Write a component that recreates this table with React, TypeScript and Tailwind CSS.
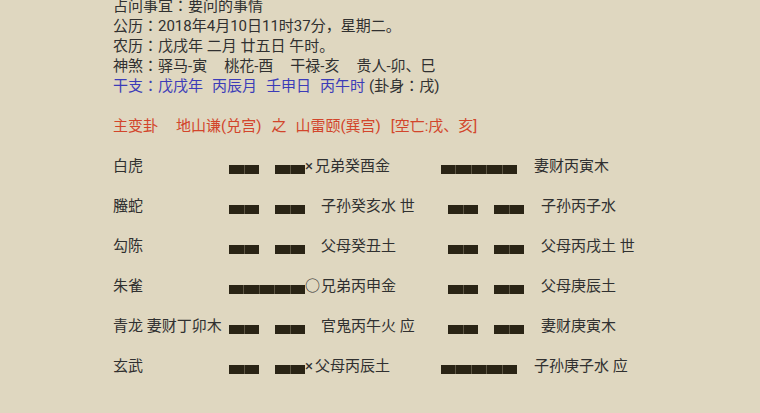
import React from "react";

type Line = "yin" | "yang";
type Row = {
  god: string;
  fu?: string;
  left: Line;
  mark?: "x" | "o";
  lt: string;
  right: Line;
  rt: string;
};

const rows: Row[] = [
  { god: "白虎", left: "yin", mark: "x", lt: "兄弟癸酉金", right: "yang", rt: "妻财丙寅木" },
  { god: "螣蛇", left: "yin", lt: "子孙癸亥水 世", right: "yin", rt: "子孙丙子水" },
  { god: "勾陈", left: "yin", lt: "父母癸丑土", right: "yin", rt: "父母丙戌土 世" },
  { god: "朱雀", left: "yang", mark: "o", lt: "兄弟丙申金", right: "yin", rt: "父母庚辰土" },
  { god: "青龙", fu: "妻财丁卯木", left: "yin", lt: "官鬼丙午火 应", right: "yin", rt: "妻财庚寅木" },
  { god: "玄武", left: "yin", mark: "x", lt: "父母丙辰土", right: "yang", rt: "子孙庚子水 应" },
];

function Seg() {
  return <div className="flex-1 h-full bg-[#2a2415] border-l border-[#5d5644] first:border-l-0" />;
}

function Bar({ type }: { type: Line }) {
  if (type === "yang") {
    return (
      <div className="flex w-[76px] h-[9px] mt-[6px]">
        <Seg />
        <Seg />
        <Seg />
        <Seg />
        <Seg />
      </div>
    );
  }
  return (
    <div className="flex w-[76px] h-[9px] mt-[6px] gap-[16px]">
      <div className="flex w-[30px] h-full">
        <Seg />
        <Seg />
      </div>
      <div className="flex w-[30px] h-full">
        <Seg />
        <Seg />
      </div>
    </div>
  );
}

export default function App() {
  return (
    <div className="w-[760px] h-[413px] overflow-hidden bg-[#dfd7c0] text-[#303030] text-[15px] leading-[20px] font-[Roboto,'Noto_Sans_CJK_JP','Noto_Sans_CJK_SC',sans-serif]">
      <div className="pl-[113px] -mt-[4px]">
        <div>占问事宜：要问的事情</div>
        <div>公历：2018年4月10日11时37分，星期二。</div>
        <div>农历：戊戌年 二月 廿五日 午时。</div>
        <div className="flex">
          <span>神煞：驿马-寅</span>
          <span className="ml-[17px]">桃花-酉</span>
          <span className="ml-[17px]">干禄-亥</span>
          <span className="ml-[17px]">贵人-卯、巳</span>
        </div>
        <div className="flex">
          <span className="text-[#3c3cb8]">干支：戊戌年</span>
          <span className="ml-[9px] text-[#3c3cb8]">丙辰月</span>
          <span className="ml-[9px] text-[#3c3cb8]">壬申日</span>
          <span className="ml-[9px] text-[#3c3cb8]">丙午时</span>
          <span className="ml-[4px]">(卦身：戌)</span>
        </div>

        <div className="flex mt-[20px] text-[#d2452b]">
          <span>主变卦</span>
          <span className="ml-[18px]">地山谦(兑宫)</span>
          <span className="ml-[10px]">之</span>
          <span className="ml-[9px]">山雷颐(巽宫)</span>
          <span className="ml-[10px]">[空亡:戌、亥]</span>
        </div>

        <div className="mt-[10px] flex flex-col">
          {rows.map((r, i) => (
            <div key={i} className="flex items-center h-[40px]">
              <div className="w-[116px] whitespace-nowrap">
                {r.god}
                {r.fu ? " " + r.fu : ""}
              </div>
              <Bar type={r.left} />
              <div className="w-[136px] flex items-center whitespace-nowrap">
                {r.mark === "x" ? (
                  <span className="w-[10px]">×</span>
                ) : r.mark === "o" ? (
                  <span className="w-[16px]">○</span>
                ) : (
                  <span className="w-[16px]" />
                )}
                <span>{r.lt}</span>
              </div>
              <div className={r.right === "yin" ? "pl-[7px] flex items-center" : "flex items-center"}>
                <Bar type={r.right} />
                <span className="ml-[17px] whitespace-nowrap">{r.rt}</span>
              </div>
            </div>
          ))}
        </div>
      </div>
    </div>
  );
}
